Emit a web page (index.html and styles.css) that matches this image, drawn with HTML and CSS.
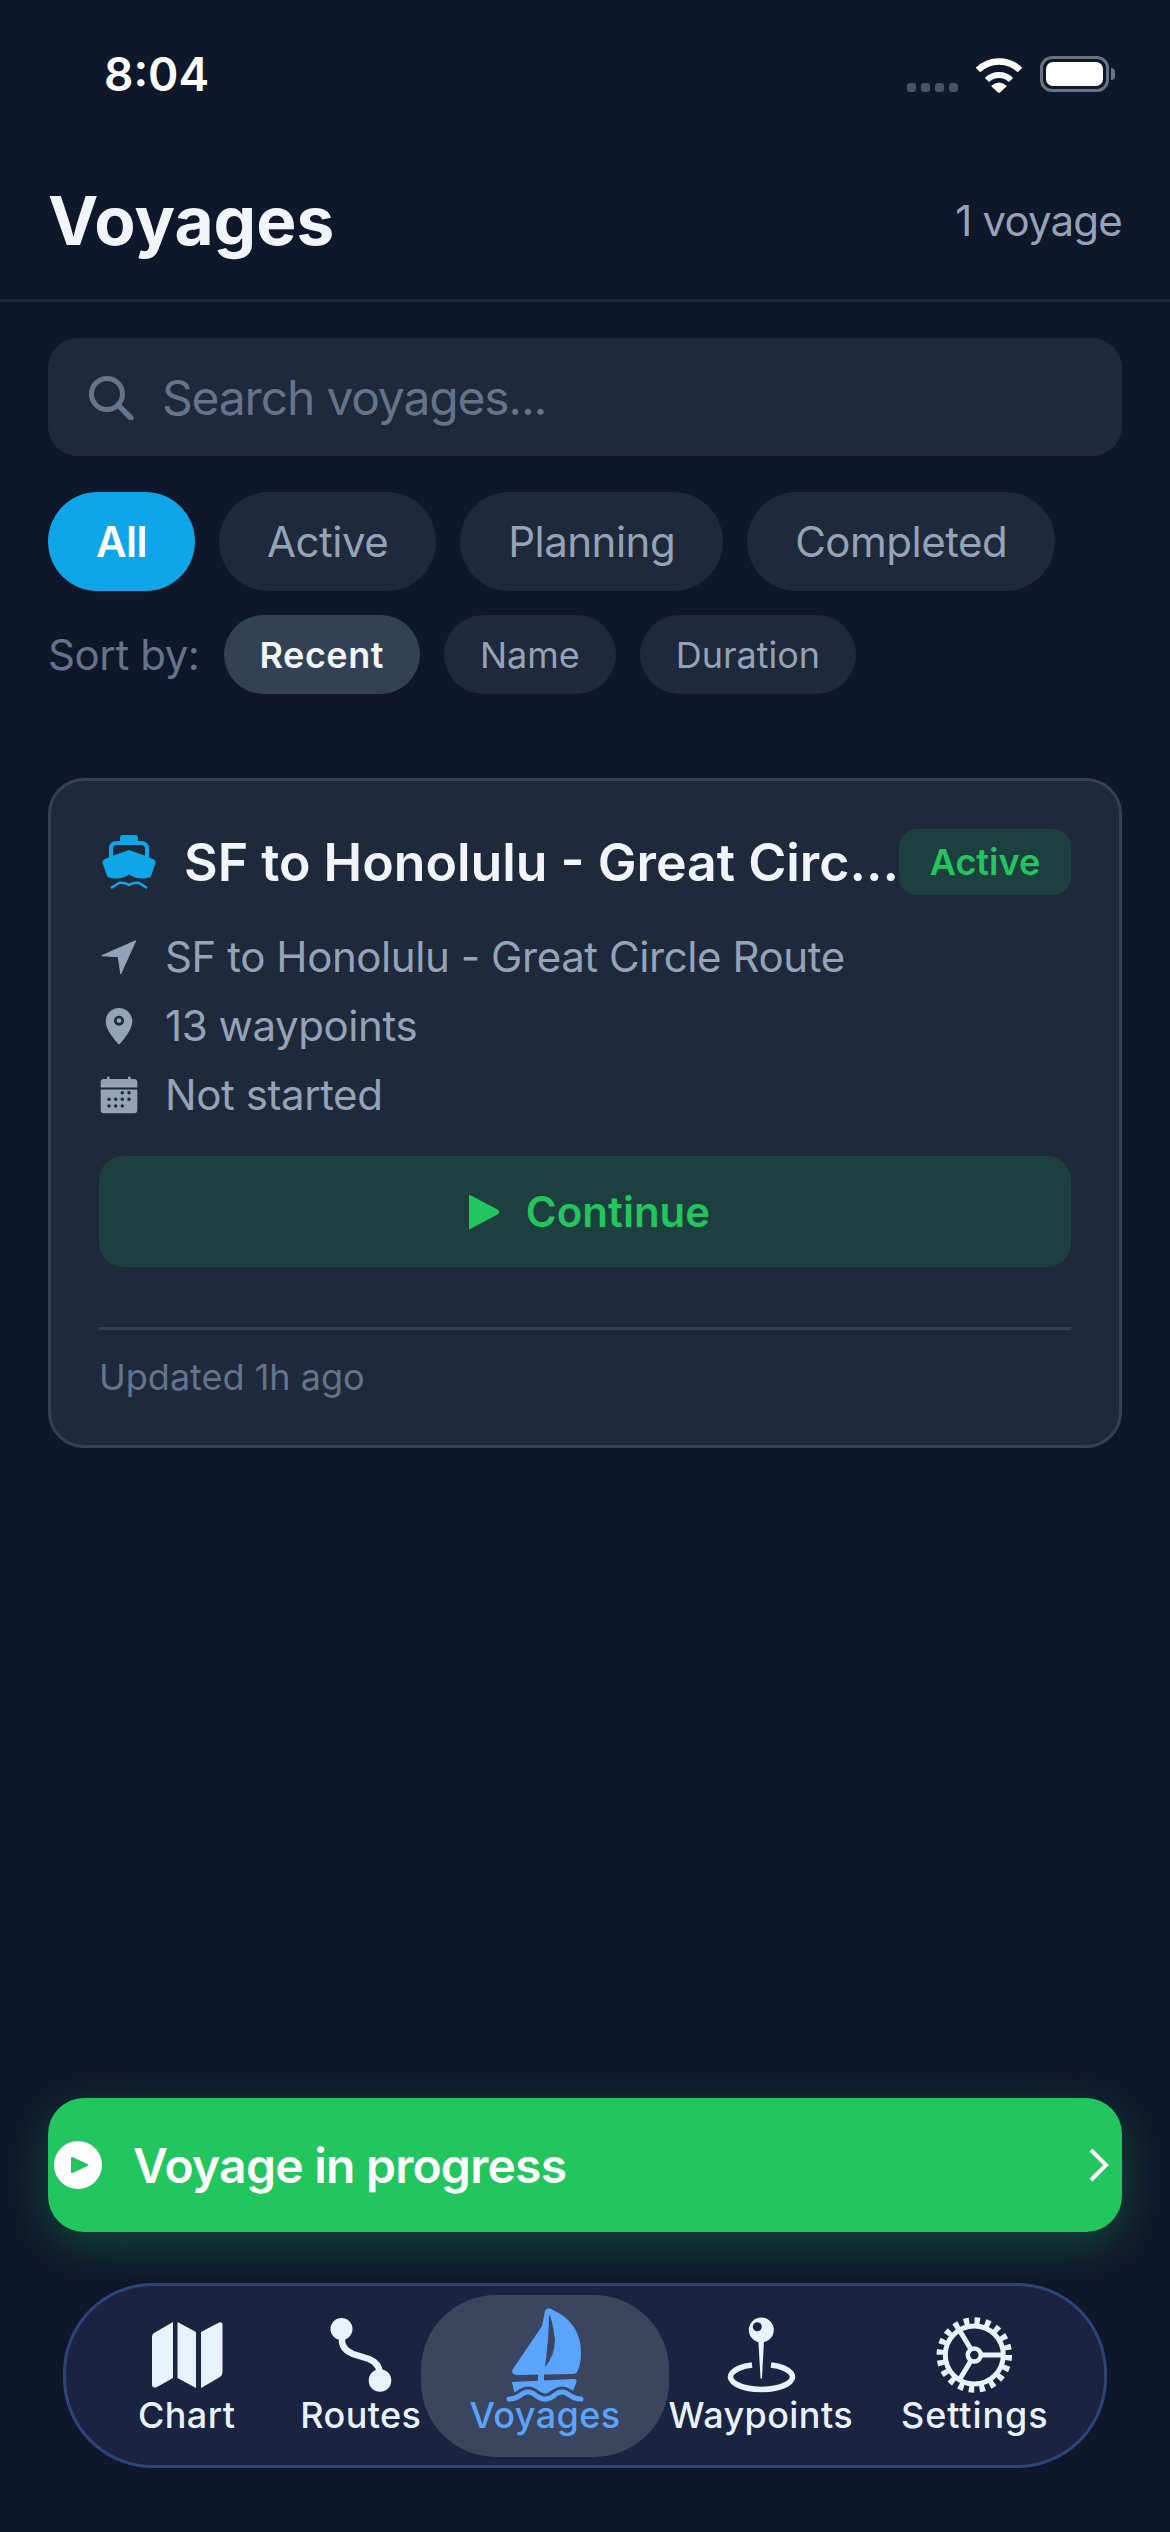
FILE: index.html
```html
<!DOCTYPE html>
<html lang="en">
<head>
    <meta charset="UTF-8" />
    <title>Voyages</title>
    <link rel="stylesheet" href="styles.css">
</head>
<body>
    <div class="status-bar">
        <span class="status-time">8:04</span>
        <div class="status-icons">
            <div class="signal"><i></i><i></i><i></i><i></i></div>
            <svg class="wifi" width="48" height="37" viewBox="0 0 48 37">
                <path d="M3 14 A30 30 0 0 1 45 14" fill="none" stroke="#fff" stroke-width="6.5"/>
                <path d="M12 24 A17 17 0 0 1 36 24" fill="none" stroke="#fff" stroke-width="6"/>
                <path d="M16 30 Q24 23 32 30 L25 36.5 Q24 37 23 36.5Z" fill="#fff"/>
            </svg>
            <div class="battery"><div class="battery-level"></div></div>
            <div class="battery-nub"></div>
        </div>
    </div>

    <header class="header">
        <h1>Voyages</h1>
        <span class="count">1 voyage</span>
    </header>

    <div class="search">
        <svg width="46" height="46" viewBox="0 0 46 46">
            <circle cx="19" cy="20" r="15.5" fill="none" stroke="#64748b" stroke-width="5"/>
            <path d="M30 31 L43 44" stroke="#64748b" stroke-width="5.5" stroke-linecap="round"/>
        </svg>
        <span>Search voyages...</span>
    </div>

    <div class="filters">
        <div class="chip chip-on">All</div>
        <div class="chip">Active</div>
        <div class="chip">Planning</div>
        <div class="chip">Completed</div>
    </div>

    <div class="sort">
        <span class="sort-label">Sort by:</span>
        <div class="sort-chip sort-on">Recent</div>
        <div class="sort-chip">Name</div>
        <div class="sort-chip">Duration</div>
    </div>

    <main class="list">
        <section class="card">
            <div class="card-top">
                <svg class="ship" width="64" height="64" viewBox="0 0 64 64" fill="#0ea5e9">
                    <rect x="23" y="5" width="18" height="10" rx="3"/>
                    <path d="M14 30 V19 Q14 13 20 13 H44 Q50 13 50 19 V30" fill="none" stroke="#0ea5e9" stroke-width="4"/>
                    <path d="M32 20 L49 26 L57 29.5 Q59 30.5 58.5 33 L54 46 Q53 48 50 48 Q40 50 32 44.5 Q24 50 14 48 Q11 48 10 46 L5.5 33 Q5 30.5 7 29.5 L15 26Z"/>
                    <path d="M14 58 L22 53 Q27 52 32 55 Q37 52 42 53 L50 58" fill="none" stroke="#0ea5e9" stroke-width="2.6"/>
                </svg>
                <h2 class="card-title">SF to Honolulu - Great Circ…</h2>
                <span class="badge">Active</span>
            </div>
            <div class="meta">
                <div class="meta-row">
                    <svg width="42" height="42" viewBox="0 0 42 42"><path d="M36.7 4.7 L2.7 19.7 L19.3 20.7 L21.7 38Z" fill="#94a3b8" stroke="#94a3b8" stroke-width="1" stroke-linejoin="round"/></svg>
                    <span>SF to Honolulu - Great Circle Route</span>
                </div>
                <div class="meta-row">
                    <svg width="42" height="42" viewBox="0 0 42 42">
                        <path d="M20 3 C27.5 3 33.3 9 33.3 16.5 C33.3 25 24 35 21 38.8 Q20 39.8 19 38.8 C16 35 6.7 25 6.7 16.5 C6.7 9 12.5 3 20 3Z" fill="#94a3b8"/>
                        <circle cx="20" cy="15.7" r="3.7" fill="none" stroke="#1e293b" stroke-width="2.6"/>
                    </svg>
                    <span>13 waypoints</span>
                </div>
                <div class="meta-row">
                    <svg width="42" height="42" viewBox="0 0 42 42" fill="#94a3b8">
                        <rect x="8" y="2.5" width="2.6" height="5" rx="1"/>
                        <rect x="29" y="2.5" width="2.6" height="5" rx="1"/>
                        <path d="M1.7 13.5 V8 Q1.7 5 5 5 H35 Q38.3 5 38.3 8 V13.5Z"/>
                        <path d="M1.7 15.5 H38.3 V36 Q38.3 39.3 35 39.3 H5 Q1.7 39.3 1.7 36Z"/>
                        <g fill="#1e293b">
                            <circle cx="23.3" cy="18.7" r="1.7"/><circle cx="30" cy="18.7" r="1.7"/>
                            <circle cx="10" cy="25.3" r="1.7"/><circle cx="16.7" cy="25.3" r="1.7"/><circle cx="23.3" cy="25.3" r="1.7"/><circle cx="30" cy="25.3" r="1.7"/>
                            <circle cx="10" cy="32" r="1.7"/><circle cx="16.7" cy="32" r="1.7"/><circle cx="23.3" cy="32" r="1.7"/>
                        </g>
                    </svg>
                    <span>Not started</span>
                </div>
            </div>
            <div class="continue">
                <svg width="31" height="36" viewBox="0 0 31 36"><path d="M0 2.500 Q0 0 2 1.500 L29.500 16 Q31 18 29.500 20 L2 34.500 Q0 36 0 33.500Z" fill="#22c55e"/></svg>
                <span>Continue</span>
            </div>
            <div class="card-foot">Updated 1h ago</div>
        </section>
    </main>

    <div class="banner">
        <svg width="48" height="48" viewBox="0 0 48 48">
            <circle cx="24" cy="24" r="24" fill="#fff"/>
            <path d="M18 17 L33 24 L18 31Z" fill="#22c55e" stroke="#22c55e" stroke-width="2" stroke-linejoin="round"/>
        </svg>
        <span class="banner-text">Voyage in progress</span>
        <svg class="banner-arrow" width="20" height="34" viewBox="0 0 20 34"><path d="M2 2 L17 17 L2 32" fill="none" stroke="#fff" stroke-width="4"/></svg>
    </div>

    <nav class="tabs">
        <div class="tab tab-chart">
            <svg width="96" height="96" viewBox="0 0 96 96" fill="#e8f2ff">
                <path d="M15 26 L34 15 V71 L18 80 Q13 82 13 77 V30 Q13 27 15 26Z"/>
                <path d="M38.500 15 L57 25 V81 L38.500 71Z"/>
                <path d="M62 25 L80 15.500 Q83.500 14.500 83.500 18 V65 Q83.500 68 81 70 L62 81Z"/>
            </svg>
            <span>Chart</span>
        </div>
        <div class="tab tab-routes">
            <svg width="96" height="96" viewBox="0 0 96 96" fill="#e8f2ff">
                <circle cx="28.500" cy="22" r="11"/>
                <circle cx="67" cy="73.500" r="11.300"/>
                <path d="M29 30 V35 Q30 43 40 47 L56 52 Q66 56 67 66" fill="none" stroke="#e8f2ff" stroke-width="6.500"/>
            </svg>
            <span>Routes</span>
        </div>
        <div class="tab tab-active">
            <svg width="96" height="96" viewBox="0 0 96 96" fill="#5aa4ff">
                <path d="M48 4 Q50 0 54 2 Q84 15 84 46 Q84 58 80 65 Q79 67 74 67 L20 68 Q13 67 16 62 L45 19Z"/>
                <path d="M52 8 Q55 10 58 33 Q58 48 48 60 Q52 30 52 8Z" fill="#3a4660"/>
                <rect x="41" y="66" width="6" height="10"/>
                <path d="M15 75 L77 72 Q80 72 79.500 75 L76 84 Q75 87 72 87 H22 Q18 87 17 84Z"/>
                <path d="M12 92 Q19 92 25 87 Q31 83 37 87 Q43 92 48 92 Q54 92 59 87 Q65 83 71 87 Q77 92 84 92" fill="none" stroke="#3a4660" stroke-width="11"/>
                <path d="M12 92 Q19 92 25 87 Q31 83 37 87 Q43 92 48 92 Q54 92 59 87 Q65 83 71 87 Q77 92 84 92" fill="none" stroke="#5aa4ff" stroke-width="5" stroke-linecap="round"/>
            </svg>
            <span>Voyages</span>
        </div>
        <div class="tab">
            <svg width="96" height="96" viewBox="0 0 96 96" fill="#e8f2ff">
                <circle cx="48.300" cy="23" r="12.500"/>
                <circle cx="44.300" cy="19.700" r="4.500" fill="#1a2340"/>
                <path d="M45.300 33 H51 L49 71 Q48.300 73 47.500 71Z"/>
                <path d="M39 58 A31 12.500 0 1 0 58 58" fill="none" stroke="#e8f2ff" stroke-width="5.500"/>
            </svg>
            <span>Waypoints</span>
        </div>
        <div class="tab tab-settings">
            <svg width="96" height="96" viewBox="0 0 96 96" fill="none" stroke="#e8f2ff">
                <circle cx="47.300" cy="48" r="29" stroke-width="5"/>
                <circle cx="47.300" cy="48" r="34" stroke-width="7.500" stroke-dasharray="5.340 5.340"/>
                <circle cx="47.300" cy="48" r="6.500" stroke-width="4.500"/>
                <path d="M54 48 H76 M43.800 42 L31.700 22 M43.800 54 L31.700 74" stroke-width="5"/>
            </svg>
            <span>Settings</span>
        </div>
    </nav>
</body>
</html>
```

FILE: styles.css
```css
* {
    box-sizing: border-box;
}
body {
    font-family: Inter, "Liberation Sans", sans-serif;
    background-color: #0f172a;
    margin: 0;
    width: 1170px;
    height: 2532px;
    overflow: hidden;
    display: flex;
    flex-direction: column;
    color: #f1f5f9;
}
.status-bar {
    height: 148px;
    flex-shrink: 0;
    display: flex;
    align-items: center;
    justify-content: space-between;
    padding: 0 55px 0 104px;
}
.status-time {
    font-size: 46px;
    font-weight: 600;
    color: #fff;
}
.status-icons {
    display: flex;
    align-items: center;
}
.signal {
    display: flex;
    gap: 5px;
    margin: 26px 17px 0 0;
}
.signal i {
    width: 9px;
    height: 9px;
    border-radius: 3px;
    background-color: #4b5263;
}
.wifi {
    margin-right: 17px;
}
.battery {
    width: 69px;
    height: 36px;
    padding: 3px;
    border: 3px solid #6b7280;
    border-radius: 12px;
}
.battery-level {
    height: 100%;
    background-color: #fff;
    border-radius: 7px;
}
.battery-nub {
    width: 4px;
    height: 12px;
    margin-left: 2px;
    background-color: #6b7280;
    border-radius: 0 4px 4px 0;
}
.header {
    height: 154px;
    flex-shrink: 0;
    display: flex;
    align-items: center;
    justify-content: space-between;
    padding: 0 48px 7px;
    border-bottom: 3px solid #1e293b;
}
h1 {
    margin: 0;
    font-size: 67.5px;
    font-weight: 700;
}
.count {
    font-size: 42px;
    letter-spacing: -0.8px;
    color: #94a3b8;
}
.search {
    height: 118px;
    flex-shrink: 0;
    margin: 36px 48px 0;
    padding-left: 40px;
    display: flex;
    align-items: center;
    gap: 28px;
    background-color: #1e293b;
    border-radius: 30px;
    font-size: 48px;
    letter-spacing: -1.2px;
    color: #64748b;
}
.filters {
    display: flex;
    gap: 24px;
    margin: 36px 48px 0;
}
.chip {
    height: 99px;
    padding: 0 48px;
    display: flex;
    align-items: center;
    background-color: #1e293b;
    border-radius: 50px;
    font-size: 42px;
    letter-spacing: -0.5px;
    color: #94a3b8;
}
.chip-on {
    background-color: #0ea5e9;
    color: #fff;
    font-weight: 600;
}
.sort {
    display: flex;
    align-items: center;
    gap: 24px;
    margin: 24px 48px 0;
}
.sort-label {
    font-size: 42px;
    letter-spacing: -0.4px;
    color: #64748b;
}
.sort-chip {
    height: 79px;
    padding: 0 36px;
    display: flex;
    align-items: center;
    background-color: #1e293b;
    border-radius: 40px;
    font-size: 36px;
    color: #94a3b8;
}
.sort-on {
    background-color: #334155;
    color: #f1f5f9;
    font-weight: 600;
    letter-spacing: 0.5px;
}
.list {
    flex: 1;
    padding: 84px 48px 0;
}
.card {
    padding: 48px 48px 46px;
    background-color: #1e293b;
    border: 3px solid #334155;
    border-radius: 36px;
}
.card-top {
    height: 66px;
    display: flex;
    align-items: center;
}
.ship {
    flex-shrink: 0;
    margin-left: -2px;
    margin-right: 23px;
}
.card-title {
    flex: 1;
    margin: 0;
    min-width: 0;
    white-space: nowrap;
    font-size: 51.8px;
    font-weight: 600;
    color: #f1f5f9;
}
.badge {
    width: 172px;
    height: 66px;
    flex-shrink: 0;
    display: flex;
    align-items: center;
    justify-content: center;
    background-color: rgba(34, 197, 94, 0.15);
    border-radius: 18px;
    font-size: 36px;
    font-weight: 600;
    color: #22c55e;
}
.meta {
    display: flex;
    flex-direction: column;
    gap: 18px;
    margin-top: 36px;
}
.meta-row {
    height: 51px;
    display: flex;
    align-items: center;
    gap: 24px;
    font-size: 42px;
    letter-spacing: -0.42px;
    color: #94a3b8;
}
.continue {
    height: 111px;
    margin-top: 36px;
    padding-left: 9px;
    display: flex;
    align-items: center;
    justify-content: center;
    gap: 26px;
    background-color: rgba(34, 197, 94, 0.15);
    border-radius: 24px;
    font-size: 42px;
    font-weight: 600;
    color: #22c55e;
}
.card-foot {
    margin-top: 60px;
    padding-top: 25px;
    border-top: 3px solid #334155;
    font-size: 36px;
    line-height: 44px;
    color: #64748b;
}
.banner {
    height: 134px;
    flex-shrink: 0;
    margin: 0 48px 51px;
    padding: 0 13px 0 6px;
    display: flex;
    align-items: center;
    background-color: #22c55e;
    border-radius: 36px;
    box-shadow: 0 12px 48px rgba(34, 197, 94, 0.3);
}
.banner-text {
    margin-left: 31px;
    font-size: 48px;
    font-weight: 600;
    letter-spacing: -0.75px;
    color: #fff;
}
.banner-arrow {
    margin-left: auto;
}
.tabs {
    height: 185px;
    flex-shrink: 0;
    margin: 0 63px 64px;
    padding: 21px 0 0 72px;
    display: flex;
    align-items: flex-start;
    gap: 48px;
    background-color: #1a2340;
    border: 3px solid #2c4578;
    border-radius: 90px;
}
.tab {
    position: relative;
    display: flex;
    flex-direction: column;
    align-items: center;
    font-size: 36px;
    font-weight: 500;
    letter-spacing: 0.4px;
    line-height: 44px;
    color: #e8f2ff;
}
.tab svg {
    position: relative;
    flex-shrink: 0;
    margin-bottom: -10px;
}
.tab span {
    position: relative;
    white-space: nowrap;
}
.tab-chart {
    margin-right: 17px;
}
.tab-settings {
    letter-spacing: 0.9px;
}
.tab-active {
    color: #5aa4ff;
}
.tab-active::before {
    content: "";
    position: absolute;
    top: -12px;
    left: -48px;
    right: -48px;
    height: 162px;
    background-color: #3a4660;
    border-radius: 75px;
}
```
